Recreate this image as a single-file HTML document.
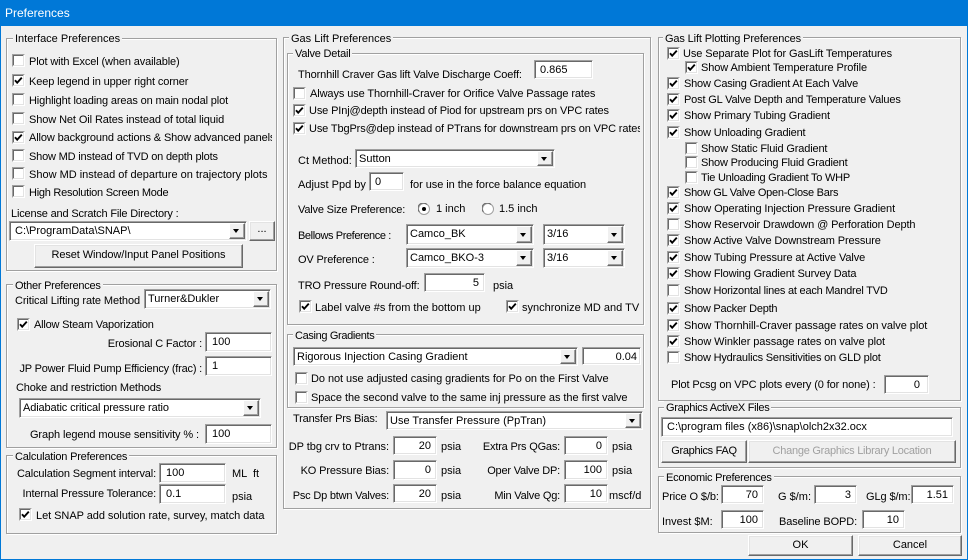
<!DOCTYPE html>
<html><head><meta charset="utf-8"><title>Preferences</title>
<style>
html,body{margin:0;padding:0}
body{width:968px;height:560px;overflow:hidden;position:relative;background:#f0f0f0;font:11px/14px "Liberation Sans",sans-serif;color:#000}
#tb{position:absolute;left:0;top:0;width:968px;height:26px;background:#0078d7;color:#fff;font-size:12px;line-height:26px;text-indent:5px}
#bl,#br,#bb{position:absolute;background:#0078d7}
#bl{left:0;top:0;width:1px;height:560px}#br{right:0;top:0;width:1px;height:560px}#bb{left:0;bottom:0;width:968px;height:1px}
.t{position:absolute;white-space:nowrap;margin-top:1px}
.r{position:absolute;white-space:nowrap;text-align:right;margin-top:1px}
.g{position:absolute;box-sizing:border-box;border:1px solid #a0a0a0;box-shadow:1px 1px 0 #fff,inset 1px 1px 0 #fff}
.l{position:absolute;white-space:nowrap;background:#f0f0f0;padding:0 2px;margin-top:1px}
.i{position:absolute;box-sizing:border-box;background:#fff;border:1px solid;border-color:#a0a0a0 #fff #fff #a0a0a0;box-shadow:inset 1px 1px 0 #696969,inset -1px -1px 0 #e3e3e3;padding:2px 5px 0 5px;white-space:nowrap;overflow:hidden;line-height:14px}
.n{text-align:right}
.d i{position:absolute;right:1px;top:1px;bottom:1px;width:16px;background:#f0f0f0;box-sizing:border-box;border:1px solid;border-color:#fff #696969 #696969 #fff;box-shadow:inset -1px -1px 0 #a0a0a0}
.d i:after{content:"";position:absolute;left:3px;top:50%;margin-top:-2px;border:3.5px solid transparent;border-top:4px solid #000;border-bottom:0}
.b{position:absolute;box-sizing:border-box;background:#f0f0f0;border:1px solid;border-color:#fff #696969 #696969 #fff;box-shadow:inset -1px -1px 0 #a0a0a0,inset 1px 1px 0 #e3e3e3;text-align:center;white-space:nowrap}
.c{position:absolute;width:13px;height:13px;display:block}
.o{position:absolute;width:12px;height:12px;display:block}
</style></head><body>
<svg width="0" height="0" style="position:absolute"><defs>
<g id="u"><rect x="0" y="0" width="13" height="13" fill="#fff"/><path d="M.5 12.5V.5H12.5" stroke="#a0a0a0" fill="none"/><path d="M1.5 11.5V1.5H11.5" stroke="#696969" fill="none"/><path d="M1.5 11.5H11.5V1.5" stroke="#e3e3e3" fill="none"/></g>
<g id="k"><use href="#u"/><path d="M3 6.2L5.2 8.7L9.8 3.6" stroke="#000" stroke-width="1.9" fill="none"/></g>
</defs></svg>
<div id="tb">Preferences</div><div id="bl"></div><div id="br"></div><div id="bb"></div>

<div class="g" style="left:6px;top:38px;width:271px;height:233px"></div><div class="l" style="left:13px;top:31px">Interface Preferences</div>
<svg class="c" style="left:12px;top:54px"><use href="#u"/></svg><div class="t" style="left:29px;top:54px;letter-spacing:-.13px">Plot with Excel (when available)</div>
<svg class="c" style="left:12px;top:74px"><use href="#k"/></svg><div class="t" style="left:29px;top:74px;letter-spacing:-.12px">Keep legend in upper right corner</div>
<svg class="c" style="left:12px;top:93px"><use href="#u"/></svg><div class="t" style="left:29px;top:93px;letter-spacing:-.14px">Highlight loading areas on main nodal plot</div>
<svg class="c" style="left:12px;top:112px"><use href="#u"/></svg><div class="t" style="left:29px;top:112px;letter-spacing:-.1px">Show Net Oil Rates instead of total liquid</div>
<svg class="c" style="left:12px;top:131px"><use href="#k"/></svg><div class="t" style="left:29px;top:130px;width:243px;overflow:hidden;letter-spacing:-.12px">Allow background actions &amp; Show advanced panels</div>
<svg class="c" style="left:12px;top:149px"><use href="#u"/></svg><div class="t" style="left:29px;top:149px;letter-spacing:-.18px">Show MD instead of TVD on depth plots</div>
<svg class="c" style="left:12px;top:167px"><use href="#u"/></svg><div class="t" style="left:29px;top:167px">Show MD instead of departure on trajectory plots</div>
<svg class="c" style="left:12px;top:185px"><use href="#u"/></svg><div class="t" style="left:29px;top:185px;letter-spacing:-.25px">High Resolution Screen Mode</div>
<div class="t" style="left:11px;top:206px;letter-spacing:-.17px">License and Scratch File Directory :</div>
<div class="i d" style="left:9px;top:221px;width:238px;height:20px">C:\ProgramData\SNAP\<i></i></div>
<div class="b" style="left:249px;top:221px;width:26px;height:20px">...</div>
<div class="b" style="left:34px;top:244px;width:209px;height:24px;line-height:21px;letter-spacing:-.1px">Reset Window/Input Panel Positions</div>

<div class="g" style="left:6px;top:284px;width:271px;height:164px"></div><div class="l" style="left:13px;top:278px;letter-spacing:-.25px">Other Preferences</div>
<div class="t" style="left:15px;top:293px;letter-spacing:-.1px">Critical Lifting rate Method</div>
<div class="i d" style="left:144px;top:289px;width:127px;height:20px;padding-left:3px">Turner&amp;Dukler<i></i></div>
<svg class="c" style="left:17px;top:318px"><use href="#k"/></svg><div class="t" style="left:34px;top:317px;letter-spacing:-.2px">Allow Steam Vaporization</div>
<div class="r" style="left:80px;width:122px;top:336px;letter-spacing:-.15px">Erosional C Factor :</div>
<div class="i" style="left:205px;top:332px;width:67px;height:20px;padding-left:6px">100</div>
<div class="r" style="left:10px;width:192px;top:361px;letter-spacing:-.2px">JP Power Fluid Pump Efficiency (frac) :</div>
<div class="i" style="left:205px;top:356px;width:67px;height:20px;padding-left:6px">1</div>
<div class="t" style="left:16px;top:380px;letter-spacing:-.14px">Choke and restriction Methods</div>
<div class="i d" style="left:19px;top:398px;width:242px;height:20px;padding-left:3px;letter-spacing:-.12px">Adiabatic critical pressure ratio<i></i></div>
<div class="r" style="left:10px;width:189px;top:427px;letter-spacing:-.1px">Graph legend mouse sensitivity % :</div>
<div class="i" style="left:205px;top:424px;width:67px;height:20px;padding-left:6px">100</div>

<div class="g" style="left:6px;top:455px;width:271px;height:79px"></div><div class="l" style="left:13px;top:449px;letter-spacing:-.2px">Calculation Preferences</div>
<div class="r" style="left:10px;width:146px;top:466px;letter-spacing:-.14px">Calculation Segment interval:</div>
<div class="i" style="left:159px;top:463px;width:67px;height:20px;padding-left:6px">100</div>
<div class="t" style="left:232px;top:466px">ML</div><div class="t" style="left:253px;top:466px">ft</div>
<div class="r" style="left:10px;width:146px;top:486px;letter-spacing:-.14px">Internal Pressure Tolerance:</div>
<div class="i" style="left:159px;top:484px;width:67px;height:20px;padding-left:6px">0.1</div>
<div class="t" style="left:232px;top:489px">psia</div>
<svg class="c" style="left:19px;top:508px"><use href="#k"/></svg><div class="t" style="left:36px;top:508px;letter-spacing:-.05px">Let SNAP add solution rate, survey, match data</div>

<div class="g" style="left:283px;top:37px;width:368px;height:472px"></div><div class="l" style="left:289px;top:31px">Gas Lift Preferences</div>
<div class="g" style="left:287px;top:53px;width:357px;height:272px"></div><div class="l" style="left:293px;top:46px;letter-spacing:-.2px">Valve Detail</div>
<div class="t" style="left:298px;top:67px;letter-spacing:-.13px">Thornhill Craver Gas lift Valve Discharge Coeff:</div>
<div class="i" style="left:534px;top:60px;width:59px;height:19px">0.865</div>
<svg class="c" style="left:293px;top:87px"><use href="#u"/></svg><div class="t" style="left:310px;top:86px;letter-spacing:-.1px">Always use Thornhill-Craver for Orifice Valve Passage rates</div>
<svg class="c" style="left:293px;top:104px"><use href="#k"/></svg><div class="t" style="left:309px;top:103px;letter-spacing:-.13px">Use PInj@depth instead of Piod for upstream prs on VPC rates</div>
<svg class="c" style="left:293px;top:122px"><use href="#k"/></svg><div class="t" style="left:309px;top:121px;width:331px;overflow:hidden;letter-spacing:-.13px">Use TbgPrs@dep instead of PTrans for downstream prs on VPC rates</div>
<div class="t" style="left:298px;top:153px">Ct Method:</div>
<div class="i d" style="left:355px;top:149px;width:200px;height:19px;padding-left:3px">Sutton<i></i></div>
<div class="t" style="left:298px;top:177px">Adjust Ppd by</div>
<div class="i" style="left:369px;top:172px;width:35px;height:19px">0</div>
<div class="t" style="left:410px;top:177px;letter-spacing:-.05px">for use in the force balance equation</div>
<div class="t" style="left:298px;top:202px;letter-spacing:-.18px">Valve Size Preference:</div>
<svg class="o" style="left:418px;top:203px" viewBox="0 0 12 12"><circle cx="6" cy="6" r="5.5" fill="#fff" stroke="#a0a0a0"/><path d="M1.5 9A5 5 0 0 1 9 1.5" stroke="#696969" fill="none"/><circle cx="6" cy="6" r="2" fill="#000"/></svg>
<div class="t" style="left:436px;top:201px">1 inch</div>
<svg class="o" style="left:482px;top:203px" viewBox="0 0 12 12"><circle cx="6" cy="6" r="5.5" fill="#fff" stroke="#a0a0a0"/><path d="M1.5 9A5 5 0 0 1 9 1.5" stroke="#696969" fill="none"/></svg>
<div class="t" style="left:499px;top:201px">1.5 inch</div>
<div class="t" style="left:298px;top:228px;letter-spacing:-.4px">Bellows Preference :</div>
<div class="i d" style="left:406px;top:224px;width:128px;height:21px;padding-left:3px">Camco_BK<i></i></div>
<div class="i d" style="left:543px;top:224px;width:82px;height:21px;padding-left:3px">3/16<i></i></div>
<div class="t" style="left:298px;top:252px;letter-spacing:-.15px">OV Preference :</div>
<div class="i d" style="left:406px;top:248px;width:128px;height:20px;padding-left:3px">Camco_BKO-3<i></i></div>
<div class="i d" style="left:543px;top:248px;width:82px;height:20px;padding-left:3px">3/16<i></i></div>
<div class="t" style="left:298px;top:278px;letter-spacing:-.13px">TRO Pressure Round-off:</div>
<div class="i n" style="left:424px;top:273px;width:61px;height:19px">5</div>
<div class="t" style="left:493px;top:278px">psia</div>
<svg class="c" style="left:299px;top:300px"><use href="#k"/></svg><div class="t" style="left:315px;top:300px">Label valve #s from the bottom up</div>
<svg class="c" style="left:506px;top:300px"><use href="#k"/></svg><div class="t" style="left:522px;top:300px;width:118px;overflow:hidden">synchronize MD and TVD</div>

<div class="g" style="left:287px;top:334px;width:357px;height:74px"></div><div class="l" style="left:293px;top:328px;letter-spacing:-.35px">Casing Gradients</div>
<div class="i d" style="left:293px;top:347px;width:285px;height:19px;padding-left:3px">Rigorous Injection Casing Gradient<i></i></div>
<div class="i n" style="left:582px;top:347px;width:59px;height:18px;padding-right:3px">0.04</div>
<svg class="c" style="left:295px;top:372px"><use href="#u"/></svg><div class="t" style="left:311px;top:371px;letter-spacing:-.06px">Do not use adjusted casing gradients for Po on the First Valve</div>
<svg class="c" style="left:295px;top:391px"><use href="#u"/></svg><div class="t" style="left:311px;top:390px;letter-spacing:-.05px">Space the second valve to the same inj pressure as the first valve</div>
<div class="t" style="left:293px;top:411px;letter-spacing:-.17px">Transfer Prs Bias:</div>
<div class="i d" style="left:386px;top:411px;width:257px;height:19px;padding-left:3px">Use Transfer Pressure (PpTran)<i></i></div>
<div class="r" style="left:285px;width:104px;top:439px;letter-spacing:-.05px">DP tbg crv to Ptrans:</div>
<div class="i n" style="left:393px;top:436px;width:44px;height:19px">20</div><div class="t" style="left:441px;top:439px">psia</div>
<div class="r" style="left:480px;width:80px;top:439px;letter-spacing:-.2px">Extra Prs QGas:</div>
<div class="i n" style="left:564px;top:436px;width:44px;height:19px">0</div><div class="t" style="left:612px;top:439px">psia</div>
<div class="r" style="left:285px;width:104px;top:463px;letter-spacing:-.12px">KO Pressure Bias:</div>
<div class="i n" style="left:393px;top:460px;width:44px;height:20px">0</div><div class="t" style="left:441px;top:463px">psia</div>
<div class="r" style="left:480px;width:80px;top:463px;letter-spacing:-.2px">Oper Valve DP:</div>
<div class="i n" style="left:564px;top:460px;width:44px;height:20px">100</div><div class="t" style="left:612px;top:463px">psia</div>
<div class="r" style="left:285px;width:104px;top:488px;letter-spacing:-.2px">Psc Dp btwn Valves:</div>
<div class="i n" style="left:393px;top:484px;width:44px;height:19px">20</div><div class="t" style="left:441px;top:488px">psia</div>
<div class="r" style="left:480px;width:80px;top:488px;letter-spacing:-.2px">Min Valve Qg:</div>
<div class="i n" style="left:564px;top:484px;width:44px;height:19px">10</div><div class="t" style="left:609px;top:488px">mscf/d</div>

<div class="g" style="left:658px;top:37px;width:303px;height:364px"></div><div class="l" style="left:663px;top:31px;letter-spacing:-.14px">Gas Lift Plotting Preferences</div>
<svg class="c" style="left:667px;top:47px"><use href="#k"/></svg><div class="t" style="left:683px;top:46px;letter-spacing:-.1px">Use Separate Plot for GasLift Temperatures</div>
<svg class="c" style="left:685px;top:61px"><use href="#k"/></svg><div class="t" style="left:701px;top:60px;letter-spacing:-.1px">Show Ambient Temperature Profile</div>
<svg class="c" style="left:667px;top:77px"><use href="#k"/></svg><div class="t" style="left:684px;top:76px;letter-spacing:-.2px">Show Casing Gradient At Each Valve</div>
<svg class="c" style="left:667px;top:93px"><use href="#k"/></svg><div class="t" style="left:684px;top:92px;letter-spacing:-.16px">Post GL Valve Depth and Temperature Values</div>
<svg class="c" style="left:667px;top:109px"><use href="#k"/></svg><div class="t" style="left:684px;top:108px;letter-spacing:-.14px">Show Primary Tubing Gradient</div>
<svg class="c" style="left:667px;top:126px"><use href="#k"/></svg><div class="t" style="left:684px;top:125px;letter-spacing:-.17px">Show Unloading Gradient</div>
<svg class="c" style="left:685px;top:142px"><use href="#u"/></svg><div class="t" style="left:701px;top:141px;letter-spacing:-.15px">Show Static Fluid Gradient</div>
<svg class="c" style="left:685px;top:156px"><use href="#u"/></svg><div class="t" style="left:701px;top:155px;letter-spacing:-.2px">Show Producing Fluid Gradient</div>
<svg class="c" style="left:685px;top:171px"><use href="#u"/></svg><div class="t" style="left:701px;top:170px;letter-spacing:-.24px">Tie Unloading Gradient To WHP</div>
<svg class="c" style="left:667px;top:186px"><use href="#k"/></svg><div class="t" style="left:684px;top:185px;letter-spacing:-.27px">Show GL Valve Open-Close Bars</div>
<svg class="c" style="left:667px;top:202px"><use href="#k"/></svg><div class="t" style="left:684px;top:201px;letter-spacing:-.1px">Show Operating Injection Pressure Gradient</div>
<svg class="c" style="left:667px;top:218px"><use href="#u"/></svg><div class="t" style="left:684px;top:217px;letter-spacing:-.11px">Show Reservoir Drawdown @ Perforation Depth</div>
<svg class="c" style="left:667px;top:234px"><use href="#k"/></svg><div class="t" style="left:684px;top:233px;letter-spacing:-.13px">Show Active Valve Downstream Pressure</div>
<svg class="c" style="left:667px;top:251px"><use href="#k"/></svg><div class="t" style="left:684px;top:250px;letter-spacing:-.11px">Show Tubing Pressure at Active Valve</div>
<svg class="c" style="left:667px;top:267px"><use href="#k"/></svg><div class="t" style="left:684px;top:266px;letter-spacing:-.15px">Show Flowing Gradient Survey Data</div>
<svg class="c" style="left:667px;top:284px"><use href="#u"/></svg><div class="t" style="left:684px;top:283px;letter-spacing:-.22px">Show Horizontal lines at each Mandrel TVD</div>
<svg class="c" style="left:667px;top:302px"><use href="#k"/></svg><div class="t" style="left:684px;top:301px;letter-spacing:-.23px">Show Packer Depth</div>
<svg class="c" style="left:667px;top:319px"><use href="#k"/></svg><div class="t" style="left:684px;top:318px;letter-spacing:-.06px">Show Thornhill-Craver passage rates on valve plot</div>
<svg class="c" style="left:667px;top:335px"><use href="#k"/></svg><div class="t" style="left:684px;top:334px;letter-spacing:-.08px">Show Winkler passage rates on valve plot</div>
<svg class="c" style="left:667px;top:351px"><use href="#u"/></svg><div class="t" style="left:684px;top:350px;letter-spacing:-.2px">Show Hydraulics Sensitivities on GLD plot</div>
<div class="t" style="left:671px;top:377px;letter-spacing:-.12px">Plot Pcsg on VPC plots every (0 for none) :</div>
<div class="i n" style="left:884px;top:375px;width:45px;height:19px;padding-right:8px">0</div>

<div class="g" style="left:658px;top:407px;width:303px;height:61px"></div><div class="l" style="left:664px;top:400px;letter-spacing:-.3px">Graphics ActiveX Files</div>
<div class="i" style="left:661px;top:417px;width:292px;height:20px">C:\program files (x86)\snap\olch2x32.ocx</div>
<div class="b" style="left:661px;top:440px;width:86px;height:23px;line-height:21px;letter-spacing:-.3px">Graphics FAQ</div>
<div class="b" style="left:748px;top:440px;width:208px;height:23px;line-height:21px;color:#a0a0a0;letter-spacing:-.25px">Change Graphics Library Location</div>

<div class="g" style="left:658px;top:476px;width:303px;height:57px"></div><div class="l" style="left:664px;top:470px;letter-spacing:-.25px">Economic Preferences</div>
<div class="t" style="left:662px;top:489px;letter-spacing:-.1px">Price O $/b:</div>
<div class="i n" style="left:721px;top:485px;width:43px;height:19px">70</div>
<div class="t" style="left:778px;top:489px">G $/m:</div>
<div class="i n" style="left:814px;top:485px;width:43px;height:19px">3</div>
<div class="t" style="left:866px;top:489px;letter-spacing:-.1px">GLg $/m:</div>
<div class="i n" style="left:911px;top:485px;width:43px;height:19px">1.51</div>
<div class="t" style="left:662px;top:514px">Invest $M:</div>
<div class="i n" style="left:721px;top:510px;width:43px;height:19px">100</div>
<div class="t" style="left:779px;top:514px;letter-spacing:-.1px">Baseline BOPD:</div>
<div class="i n" style="left:862px;top:510px;width:43px;height:19px">10</div>

<div class="b" style="left:748px;top:535px;width:105px;height:21px;line-height:18px">OK</div>
<div class="b" style="left:858px;top:535px;width:104px;height:21px;line-height:18px">Cancel</div>
</body></html>
